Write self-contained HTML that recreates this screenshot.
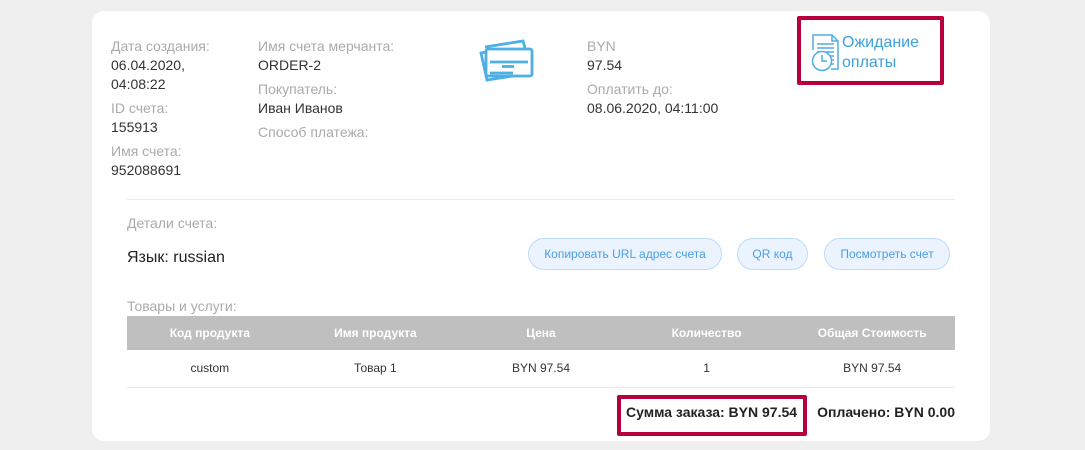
<!DOCTYPE html>
<html><head><meta charset="utf-8"><style>
body{margin:0;width:1085px;height:450px;background:#efefef;font-family:"Liberation Sans",Arial,sans-serif;position:relative;overflow:hidden}
.card{position:absolute;left:92px;top:11px;width:898px;height:430px;background:#fff;border-radius:12px}
.t{position:absolute;font-size:14px;line-height:19px;white-space:nowrap}
.l{color:#aaa}.v{color:#333}
.btn{position:absolute;top:238px;height:30px;border:1px solid #bcdcfa;background:#ebf4fe;border-radius:16px;color:#4a9de6;font-size:12px;line-height:30px;text-align:center}
.th{position:absolute;top:316px;left:127px;width:828px;height:34px;background:#bfbfbf;display:flex}
.th div,.tr div{flex:1;text-align:center;font-size:12px}
.th div{color:#fff;font-weight:bold;line-height:34px}
.tr{position:absolute;top:350px;left:127px;width:828px;height:37px;display:flex;border-bottom:1px solid #e6e9ee}
.tr div{color:#333;line-height:37px}
</style></head><body>
<div class="card"></div>
<div class="t l" style="left:111px;top:37px">Дата создания:</div>
<div class="t v" style="left:111px;top:56px">06.04.2020,</div>
<div class="t v" style="left:111px;top:75px">04:08:22</div>
<div class="t l" style="left:111px;top:99px">ID счета:</div>
<div class="t v" style="left:111px;top:118px">155913</div>
<div class="t l" style="left:111px;top:142px">Имя счета:</div>
<div class="t v" style="left:111px;top:161px">952088691</div>
<div class="t l" style="left:258px;top:37px">Имя счета мерчанта:</div>
<div class="t v" style="left:258px;top:56px">ORDER-2</div>
<div class="t l" style="left:258px;top:80px">Покупатель:</div>
<div class="t v" style="left:258px;top:99px">Иван Иванов</div>
<div class="t l" style="left:258px;top:123px">Способ платежа:</div>
<div class="t l" style="left:587px;top:37px">BYN</div>
<div class="t v" style="left:587px;top:56px">97.54</div>
<div class="t l" style="left:587px;top:80px">Оплатить до:</div>
<div class="t v" style="left:587px;top:99px">08.06.2020, 04:11:00</div>
<svg style="position:absolute;left:475px;top:35px" width="65" height="50" viewBox="475 35 65 50" fill="none" stroke="#4eaee6" stroke-width="2.8">
<path d="M486 52 L481 53 L487 80 L526 74"/>
<path d="M485 47 L523 41 L525 48"/>
<rect x="486" y="49" width="46" height="27" rx="2" fill="#fff"/>
<path d="M490 62H528M502 66.5H514M490 73H513" stroke-width="2.8"/>
</svg>
<div style="position:absolute;left:797px;top:16px;width:139px;height:61px;border:4px solid #b5003c;border-radius:2px"></div>
<svg style="position:absolute;left:806px;top:32px" width="38" height="42" viewBox="806 32 38 42" fill="none" stroke="#4eaee6" stroke-width="1.5">
<path d="M813 50V35H832L838 41V69H831"/><path d="M832 35V41H838"/>
<path d="M817 44H834M817 48H834M817 52H834M828 56H834M830 60H834M831 64H834"/>
<circle cx="822" cy="61" r="9.5" fill="#fff"/><path d="M822 55V61H827"/>
</svg>
<div class="t" style="left:842px;top:33px;font-size:16px;line-height:20px;color:#3fa0dc">Ожидание<br>оплаты</div>
<div style="position:absolute;left:127px;top:199px;width:828px;height:1px;background:#e8ebef"></div>
<div class="t l" style="left:127px;top:214px">Детали счета:</div>
<div class="t" style="left:127px;top:248px;font-size:16px;color:#222">Язык: russian</div>
<div class="btn" style="left:528px;width:192px">Копировать URL адрес счета</div>
<div class="btn" style="left:737px;width:69px">QR код</div>
<div class="btn" style="left:824px;width:124px">Посмотреть счет</div>
<div class="t l" style="left:127px;top:297px">Товары и услуги:</div>
<div class="th"><div>Код продукта</div><div>Имя продукта</div><div>Цена</div><div>Количество</div><div>Общая Стоимость</div></div>
<div class="tr"><div>custom</div><div>Товар 1</div><div>BYN 97.54</div><div>1</div><div>BYN 97.54</div></div>
<div style="position:absolute;left:617px;top:395px;width:182px;height:33px;border:4px solid #b5003c;border-radius:2px"></div>
<div class="t" style="left:626px;top:403px;font-weight:bold;color:#222">Сумма заказа: BYN 97.54</div>
<div class="t" style="right:130px;top:403px;font-weight:bold;color:#222">Оплачено: BYN 0.00</div>
</body></html>
